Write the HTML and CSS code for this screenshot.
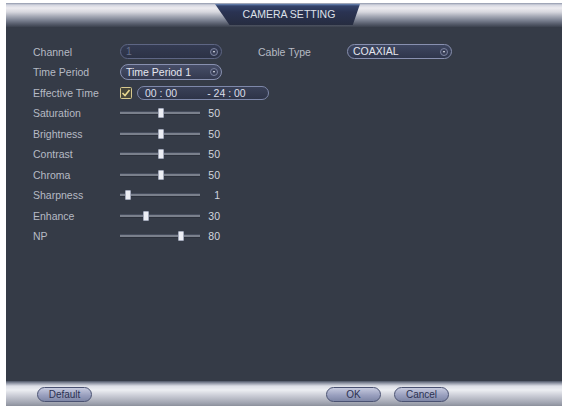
FILE: index.html
```html
<!DOCTYPE html>
<html>
<head>
<meta charset="utf-8">
<link rel="stylesheet" href="styles.css">
</head>
<body>
<div class="panel">
  <div class="titlebar">
    <div class="tab">CAMERA SETTING</div>
  </div>
  <div class="content">
    <div class="form">
      <div class="lbl">Channel</div>
      <div class="ctl"><div class="select disabled"><span class="val">1</span><span class="arrow"></span></div></div>
      <div class="lbl2">Cable Type</div>
      <div class="ctl4"><div class="select"><span class="val">COAXIAL</span><span class="arrow"></span></div></div>

      <div class="lbl">Time Period</div>
      <div class="ctl"><div class="select sel-period"><span class="val">Time Period 1</span><span class="arrow"></span></div></div>

      <div class="lbl">Effective Time</div>
      <div class="ctl-wide">
        <svg class="check" width="12" height="12" viewBox="0 0 12 12"><rect x="0.5" y="0.5" width="11" height="11" rx="1" fill="#47463a" stroke="#d6c88e"/><polyline points="2.5,6 5,8.5 9.5,3" fill="none" stroke="#e8d890" stroke-width="1.6"/></svg>
        <div class="timefield"><span>00 : 00</span><span class="t2">- 24 : 00</span></div>
      </div>

      <div class="lbl">Saturation</div>
      <div class="ctl slider"><div class="track"><div class="thumb" style="left:38px"></div></div><span class="num">50</span></div>
      <div class="lbl">Brightness</div>
      <div class="ctl slider"><div class="track"><div class="thumb" style="left:38px"></div></div><span class="num">50</span></div>
      <div class="lbl">Contrast</div>
      <div class="ctl slider"><div class="track"><div class="thumb" style="left:38px"></div></div><span class="num">50</span></div>
      <div class="lbl">Chroma</div>
      <div class="ctl slider"><div class="track"><div class="thumb" style="left:38px"></div></div><span class="num">50</span></div>
      <div class="lbl">Sharpness</div>
      <div class="ctl slider"><div class="track"><div class="thumb" style="left:5px"></div></div><span class="num">1</span></div>
      <div class="lbl">Enhance</div>
      <div class="ctl slider"><div class="track"><div class="thumb" style="left:23px"></div></div><span class="num">30</span></div>
      <div class="lbl">NP</div>
      <div class="ctl slider"><div class="track"><div class="thumb" style="left:58px"></div></div><span class="num">80</span></div>
    </div>
  </div>
  <div class="footer">
    <div class="btn">Default</div>
    <div class="btn-group">
      <div class="btn">OK</div>
      <div class="btn">Cancel</div>
    </div>
  </div>
</div>
</body>
</html>
```
FILE: styles.css
```css
html, body {
  margin: 0;
  background: #ffffff;
}
body {
  padding: 3px 0 0 6px;
  font-family: "Liberation Sans", Arial, sans-serif;
}
.panel {
  width: 556px;
  height: 403px;
  display: flex;
  flex-direction: column;
  background: #353b47;
}
.titlebar {
  height: 24px;
  flex: none;
  display: flex;
  padding-left: 209px;
  background: linear-gradient(to bottom, #8e96aa 0px, #d4d6e0 2px, #ecebf0 5px, #d6d7de 9px, #a8acb8 13px, #7e8494 17px, #565c6b 21px, #3b414e 24px);
}
.tab {
  width: 145px;
  height: 21px;
  margin-top: 1px;
  clip-path: polygon(0 0, 100% 0, 95% 100%, 10% 100%);
  background: linear-gradient(to bottom, #6a88b8 0px, #34436a 2px, #2a3352 8px, #262c40 100%);
  color: #dde0e8;
  font-size: 10.5px;
  line-height: 21px;
  text-align: center;
  padding-left: 3px;
  box-sizing: border-box;
}
.content {
  flex: 1;
  background: #353b47;
}
.form {
  display: grid;
  grid-template-columns: 87px 138px 89px 105px;
  grid-template-rows: 21px repeat(9, 20.5px);
  padding: 14px 0 0 27px;
  align-items: center;
  font-size: 10.5px;
  color: #b6bac4;
}
.lbl { grid-column: 1; }
.ctl { grid-column: 2; }
.lbl2 { grid-column: 3; }
.ctl4 { grid-column: 4; }
.ctl-wide {
  grid-column: 2 / span 2;
  display: flex;
  align-items: center;
}
.select {
  width: 102px;
  height: 15px;
  box-sizing: border-box;
  border: 1px solid #8890b0;
  border-radius: 8px;
  background: linear-gradient(to bottom, #3e4660, #2f364c);
  display: flex;
  align-items: center;
  padding: 0 3px 0 5px;
  color: #e4e6ee;
}
.ctl4 .select { width: 105px; }
.select.disabled {
  border-color: #5e6684;
  background: linear-gradient(to bottom, #343b52, #2c3246);
  color: #66708a;
}
.sel-period {
  height: 16px;
  background: linear-gradient(to bottom, #474e68, #343a50);
}
.val {
  flex: 1;
  line-height: 13px;
}
.arrow {
  width: 8px;
  height: 8px;
  border-radius: 50%;
  border: 1px solid #7a82a0;
  box-sizing: border-box;
  position: relative;
  background: #3a4058;
}
.arrow::after {
  content: "";
  position: absolute;
  left: 1.5px;
  top: 2px;
  border-left: 1.5px solid transparent;
  border-right: 1.5px solid transparent;
  border-top: 2px solid #e8eaf2;
}
.check {
  display: block;
  flex: none;
}
.timefield {
  margin-left: 5px;
  width: 132px;
  height: 14px;
  box-sizing: border-box;
  border: 1px solid #7e88aa;
  border-radius: 7px;
  background: linear-gradient(to bottom, #3a4158, #2e3448);
  display: flex;
  align-items: center;
  padding-left: 7px;
  color: #dcdfe8;
  line-height: 12px;
}
.t2 {
  margin-left: 30px;
}
.slider {
  display: flex;
  align-items: center;
}
.track {
  width: 80px;
  height: 2px;
  position: relative;
  background: #7a808c;
  box-shadow: 0 -1px 0 #454c5c, 0 1px 0 #2c313c;
}
.thumb {
  position: absolute;
  top: -4px;
  width: 6px;
  height: 10px;
  box-sizing: border-box;
  background: #eceef4;
  border: 1px solid #a4aabb;
  border-radius: 1px;
}
.num {
  width: 20px;
  text-align: right;
  color: #d2d5de;
}
.footer {
  height: 25px;
  flex: none;
  display: flex;
  justify-content: space-between;
  align-items: flex-start;
  padding: 6px 113px 0 31px;
  box-sizing: border-box;
  background: linear-gradient(to bottom, #4c5464 0px, #8a90a0 2px, #dcdee6 5px, #eceef2 9px, #c8cad4 15px, #a0a4b0 22px, #8c909c 25px);
}
.btn-group {
  display: flex;
  gap: 13px;
}
.btn {
  width: 55px;
  height: 15px;
  box-sizing: border-box;
  border: 1px solid #4a5272;
  border-radius: 8px;
  background: linear-gradient(to bottom, #c6cade, #9aa0bf 55%, #7e86a6);
  color: #2c3252;
  font-size: 10px;
  line-height: 13px;
  text-align: center;
}
```
